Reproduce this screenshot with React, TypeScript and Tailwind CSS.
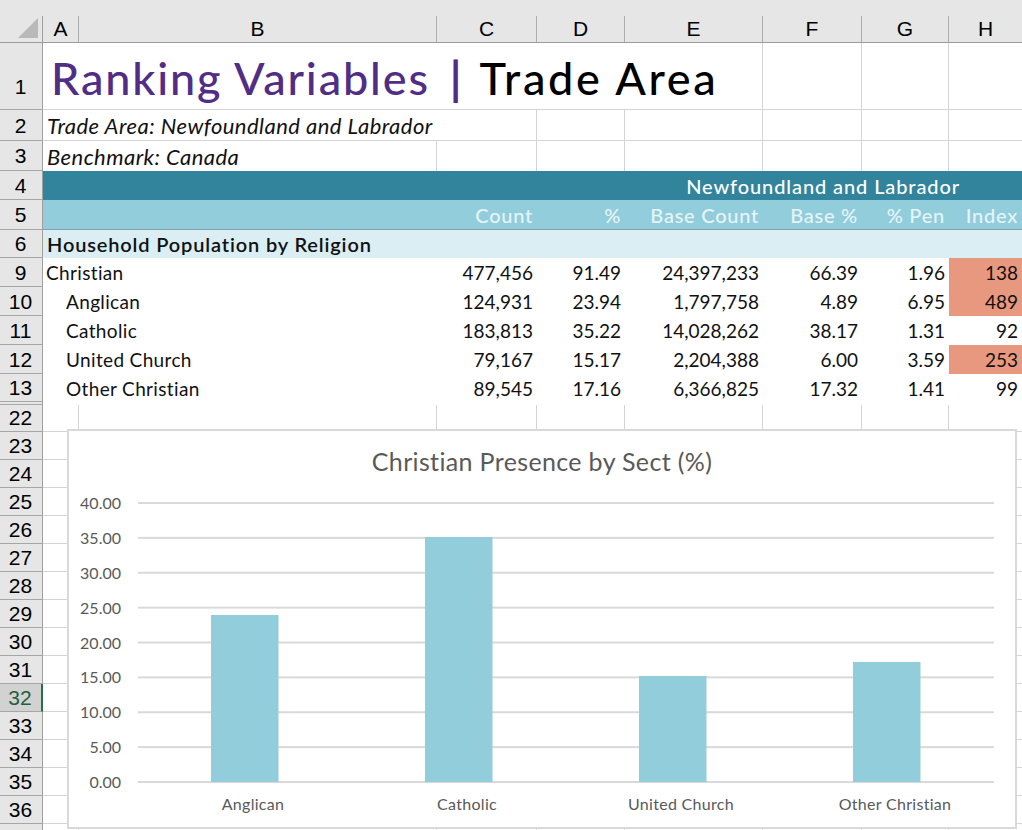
import React from "react";

const COLS = "grid grid-cols-[36px_358px_100px_88px_138px_99px_87px_73px]";
const LINE = "border-r border-[#d4d4d4]";

function RowHead({ n, h, active, align }: { n?: string; h: string; active?: boolean; align?: string }) {
  return (
    <div
      className={`${h} w-[43px] shrink-0 flex justify-center pr-[1px] border-b border-b-[#a6a6a6] ${align ?? "items-center"} ${
        active
          ? "bg-[#d2d2d2] text-[#21613f] border-r-2 border-r-[#217346]"
          : "bg-[#e6e6e6] text-black border-r border-r-[#a0a0a0]"
      } font-['Liberation_Sans',sans-serif] text-[21px] leading-none`}
    >
      {n}
    </div>
  );
}

function EmptyRow({ n, h, active, align }: { n?: string; h: string; active?: boolean; align?: string }) {
  return (
    <div className="flex">
      <RowHead n={n} h={h} active={active} align={align ?? "items-center"} />
      <div className={`${COLS} flex-1 border-b border-[#d4d4d4]`}>
        {[0, 1, 2, 3, 4, 5, 6].map((i) => (
          <div key={i} className={LINE} />
        ))}
        <div />
      </div>
    </div>
  );
}

function DataRow({
  n,
  label,
  indent,
  vals,
  hot,
  h = "h-[29px]",
  lift = "pb-[1px]",
}: {
  n: string;
  label: string;
  indent?: boolean;
  vals: string[];
  hot?: boolean;
  h?: string;
  lift?: string;
}) {
  return (
    <div className="flex">
      <RowHead n={n} h={h} />
      <div className={`${COLS} flex-1 bg-white text-[19px] text-[#111] leading-none`}>
        <div className={`col-span-2 flex items-center whitespace-nowrap tracking-[0.35px] ${lift} ${indent ? "pl-[23px]" : "pl-[3px]"}`}>{label}</div>
        {vals.map((v, i) => (
          <div
            key={i}
            className={`flex items-center justify-end pr-[4px] ${lift} ${i === 5 && hot ? "bg-[#e8987e]" : ""}`}
          >
            {v}
          </div>
        ))}
      </div>
    </div>
  );
}

const GRID = [0, 5, 10, 15, 20, 25, 30, 35, 40];
const BARS = [
  { name: "Anglican", top: 114 },
  { name: "Catholic", top: 36 },
  { name: "United Church", top: 175 },
  { name: "Other Christian", top: 161 },
];

function Chart() {
  return (
    <div className="absolute left-[67px] top-[429px] w-[950px] h-[400px] bg-white border-2 border-[#d9d9d9] text-[#595959] flex flex-col">
      <div className="h-[70px] pt-[13px] text-center text-[25px] leading-[34px] tracking-[0.35px] shrink-0">Christian Presence by Sect (%)</div>
      <div className="flex h-[300px]">
        <div className="w-[52px] shrink-0 h-[296px] flex flex-col-reverse justify-between text-[16px] leading-[17px] text-right -mt-[7px]">
          {GRID.map((g) => (
            <div key={g}>{g.toFixed(2)}</div>
          ))}
        </div>
        <div className="ml-[17px] w-[856px] flex flex-col">
          <svg width="856" height="282" viewBox="0 0 856 282" className="shrink-0 block">
            {GRID.map((g) => (
              <rect key={g} x="0" y={280 - g * 6.975} width="856" height="2" fill="#d9d9d9" />
            ))}
            {BARS.map((b, i) => (
              <rect key={b.name} x={73 + i * 214} y={b.top} width="67.5" height={281 - b.top} fill="#92cddc" />
            ))}
          </svg>
          <div className="grid grid-cols-4 w-[856px] mt-[12px] text-[16px] leading-[18px] tracking-[0.3px] text-center">
            {BARS.map((b) => (
              <div key={b.name} className="pl-[16px] whitespace-nowrap">{b.name}</div>
            ))}
          </div>
        </div>
      </div>
    </div>
  );
}

export default function App() {
  const letters = [
    ["A", "w-[36px]"],
    ["B", "w-[358px]"],
    ["C", "w-[100px]"],
    ["D", "w-[88px]"],
    ["E", "w-[138px]"],
    ["F", "w-[99px]"],
    ["G", "w-[87px]"],
    ["H", "w-[73px]"],
  ];
  return (
    <div className="relative w-[1022px] h-[830px] overflow-hidden bg-white font-['Lato',sans-serif]">
      {/* Column headers */}
      <div className="flex h-[43px] bg-[#e6e6e6] pt-[16px] border-b border-[#9c9c9c] font-['Liberation_Sans',sans-serif] text-[21px] text-black">
        <div className="w-[43px] shrink-0 border-r border-[#a0a0a0] flex items-start pl-[18px] pt-[2px]">
          <svg width="20" height="20" viewBox="0 0 20 20" className="block">
            <polygon points="20,0 20,20 0,20" fill="#b9b9b9" />
          </svg>
        </div>
        {letters.map(([l, w], i) => (
          <div
            key={l}
            className={`${w} flex items-center justify-center leading-none pb-[2px] ${i < 7 ? "border-r border-[#adadad]" : ""}`}
          >
            {l}
          </div>
        ))}
      </div>

      {/* Row 1 */}
      <div className="flex">
        <RowHead n="1" h="h-[67px]" align="items-end pb-[12px]" />
        <div className={`${COLS} flex-1 border-b border-[#d4d4d4]`}>
          <div className={`col-span-5 ${LINE} flex items-center pl-[8px] pt-[4px] text-[45px] font-medium leading-none whitespace-nowrap`}>
            <span className="text-[#512d85] tracking-[1.85px]">Ranking Variables</span>
            <span className="text-[#512d85] ml-[20px] font-bold">|</span>
            <span className="text-black ml-[18px] tracking-[2.7px]">Trade Area</span>
          </div>
          <div className={LINE} />
          <div className={LINE} />
          <div />
        </div>
      </div>

      {/* Row 2 */}
      <div className="flex">
        <RowHead n="2" h="h-[31px]" />
        <div className={`${COLS} flex-1 border-b border-[#d4d4d4]`}>
          <div className={`col-span-3 ${LINE} flex items-center pl-[4px] pt-[2px] text-[22px] leading-none tracking-[0.45px] italic text-[#111] whitespace-nowrap`}>
            Trade Area: Newfoundland and Labrador
          </div>
          <div className={LINE} />
          <div className={LINE} />
          <div className={LINE} />
          <div className={LINE} />
          <div />
        </div>
      </div>

      {/* Row 3 */}
      <div className="flex">
        <RowHead n="3" h="h-[30px]" />
        <div className={`${COLS} flex-1`}>
          <div className={`col-span-2 ${LINE} flex items-center pl-[4px] pt-[2px] text-[22px] leading-none tracking-[0.45px] italic text-[#111] whitespace-nowrap`}>
            Benchmark: Canada
          </div>
          <div className={LINE} />
          <div className={LINE} />
          <div className={LINE} />
          <div className={LINE} />
          <div className={LINE} />
          <div />
        </div>
      </div>

      {/* Row 4 */}
      <div className="flex">
        <RowHead n="4" h="h-[29px]" />
        <div className="flex-1 bg-[#31849b] flex items-center justify-end pr-[62px] pt-[1px] text-[20px] leading-none tracking-[0.9px] font-medium text-white">
          Newfoundland and Labrador
        </div>
      </div>

      {/* Row 5 */}
      <div className="flex">
        <RowHead n="5" h="h-[30px]" />
        <div className={`${COLS} flex-1 bg-[#92cddc] border-b border-[#8c9ea3] text-[20px] leading-none tracking-[0.75px] font-medium text-[#e6f4f7]`}>
          <div className="col-span-2" />
          {["Count", "%", "Base Count", "Base %", "% Pen", "Index"].map((t) => (
            <div key={t} className="flex items-center justify-end pr-[4px] whitespace-nowrap">
              {t}
            </div>
          ))}
        </div>
      </div>

      {/* Row 6 */}
      <div className="flex">
        <RowHead n="6" h="h-[28px]" />
        <div className="flex-1 bg-[#daeef3] flex items-center pl-[4px] text-[20px] leading-none tracking-[0.85px] font-semibold text-[#111]">
          Household Population by Religion
        </div>
      </div>

      <DataRow n="9" label="Christian" vals={["477,456", "91.49", "24,397,233", "66.39", "1.96", "138"]} hot />
      <DataRow n="10" label="Anglican" indent vals={["124,931", "23.94", "1,797,758", "4.89", "6.95", "489"]} hot />
      <DataRow n="11" label="Catholic" indent vals={["183,813", "35.22", "14,028,262", "38.17", "1.31", "92"]} />
      <DataRow n="12" label="United Church" indent vals={["79,167", "15.17", "2,204,388", "6.00", "3.59", "253"]} hot />
      <DataRow n="13" label="Other Christian" indent h="h-[28px]" lift="pb-0" vals={["89,545", "17.16", "6,366,825", "17.32", "1.41", "99"]} />

      {/* Hidden rows seam */}
      <div className="flex">
        <RowHead h="h-[3px]" />
        <div className="flex-1" />
      </div>

      <EmptyRow n="22" h="h-[27px]" align="items-center pb-[2px]" />
      {["23", "24", "25", "26", "27", "28", "29", "30", "31", "32", "33", "34", "35", "36"].map((n) => (
        <EmptyRow key={n} n={n} h="h-[28px]" active={n === "32"} />
      ))}
      <EmptyRow h="h-[28px]" />

      <Chart />
    </div>
  );
}
